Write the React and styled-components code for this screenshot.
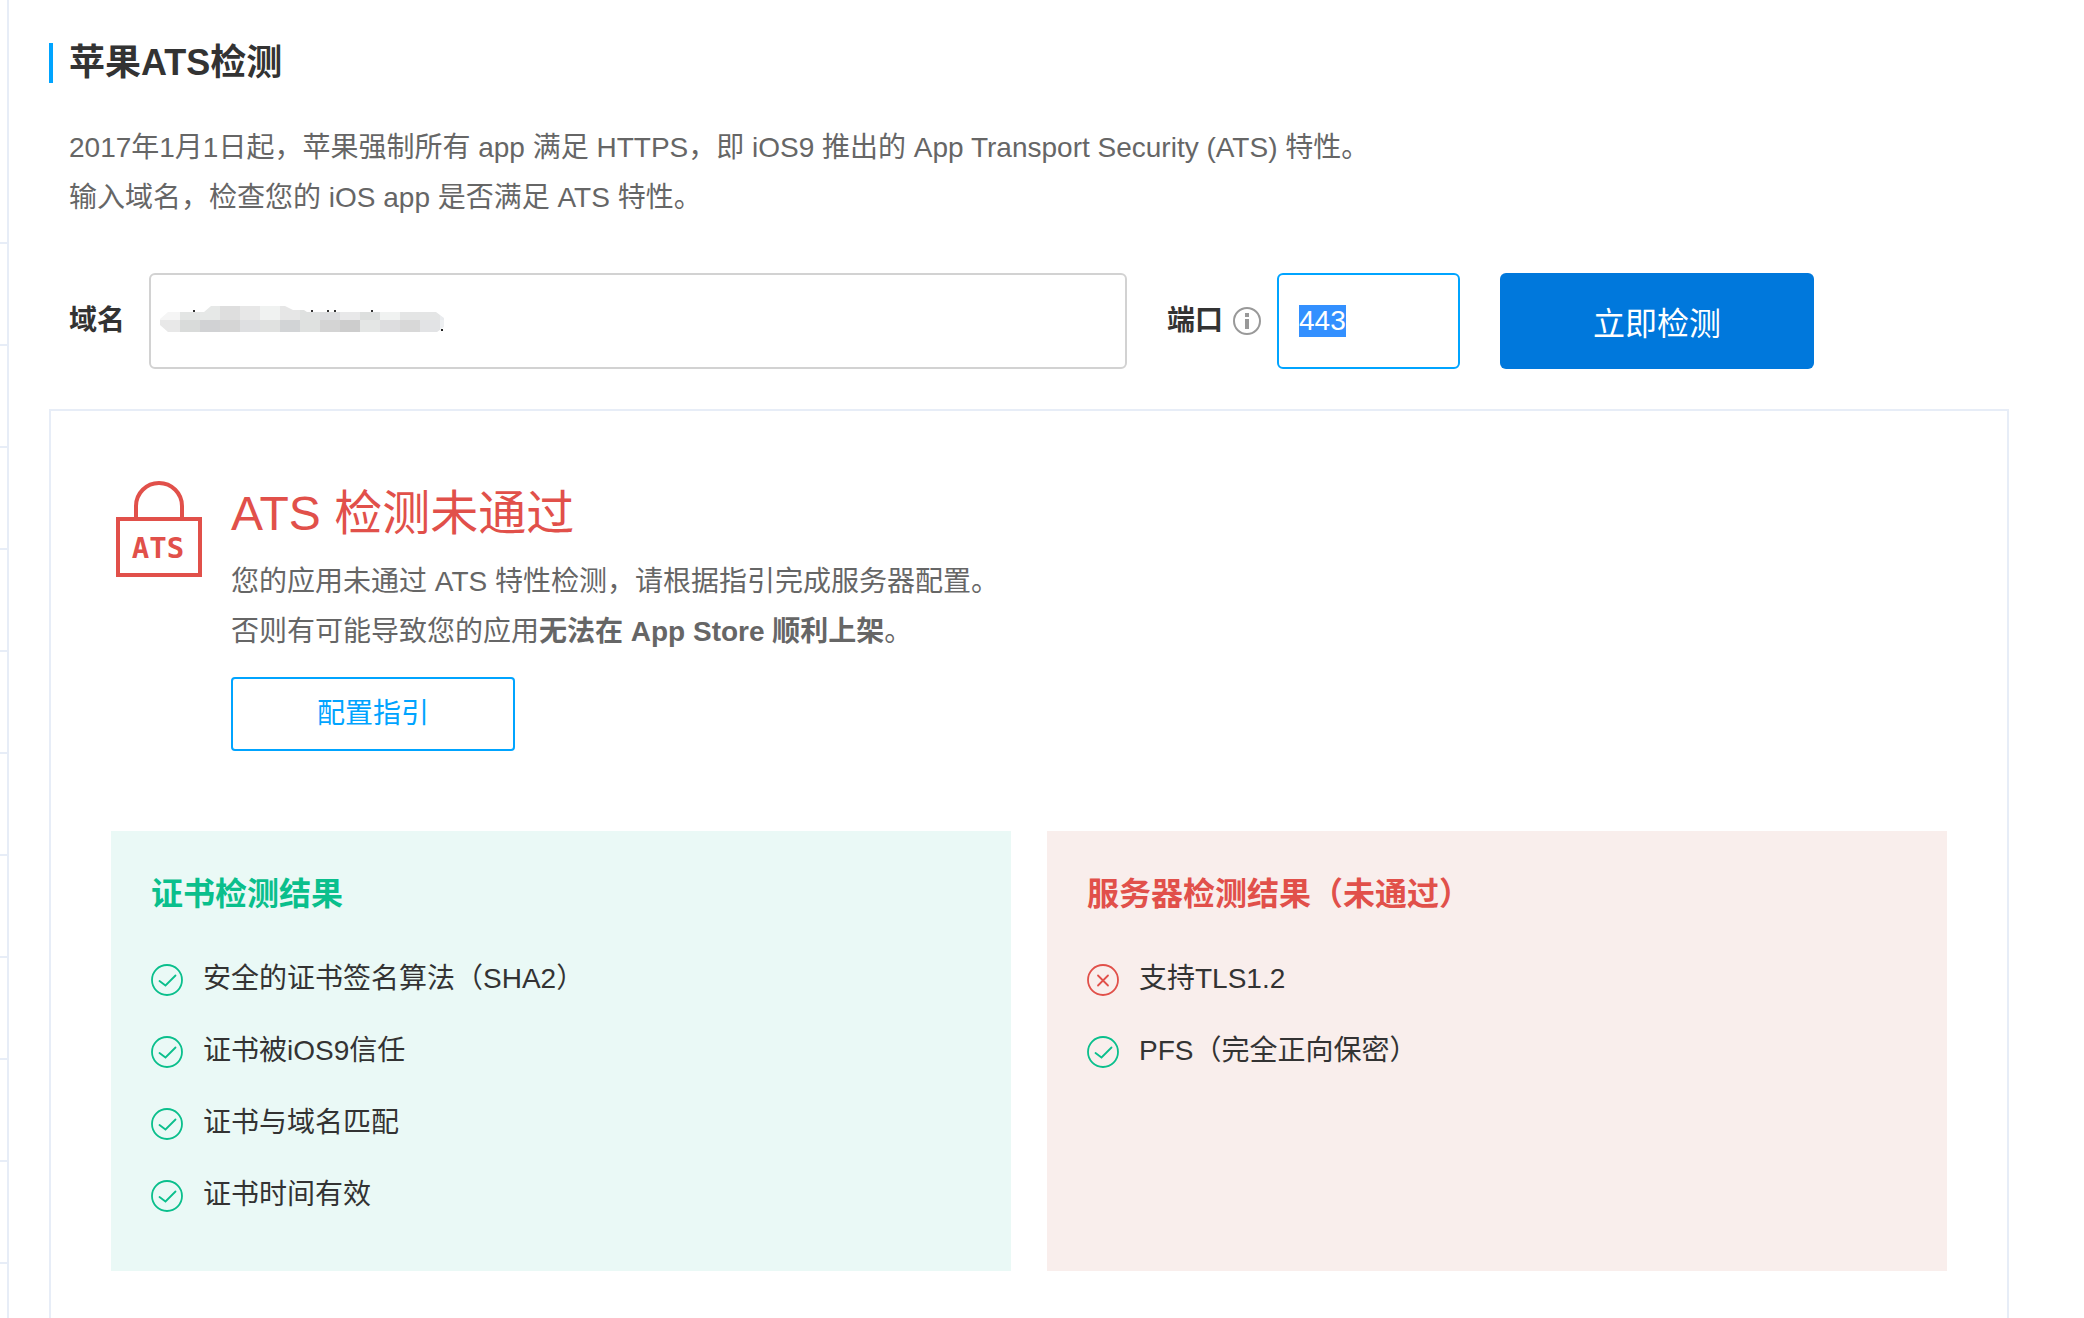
import React, { useEffect, useRef } from "react";
import styled, { createGlobalStyle } from "styled-components";

const LINE = "#e7edf7";
const BLUE = "#00a4ff";
const RED = "#e1504a";
const GREEN = "#0abf8c";

const GlobalStyle = createGlobalStyle`
  *, *::before, *::after { box-sizing: border-box; }
  body {
    margin: 0;
    background: #fff;
    color: #333;
    font-family: "Liberation Sans", "Noto Sans CJK SC", sans-serif;
    font-size: 28px;
  }
  h1, h2, h3, p, ul { margin: 0; padding: 0; }
  ::selection { background: #3390ff; color: #fff; }
`;

const Page = styled.div`
  display: flex;
  min-height: 100vh;
`;

const Rail = styled.aside`
  display: flex;
  width: 9px;
  flex: none;
  padding-top: 242px;
  border-right: 2px solid ${LINE};
`;

const RailTicks = styled.div`
  flex: 1;
  background: repeating-linear-gradient(${LINE} 0 2px, transparent 2px 102px);
`;

const Main = styled.main`
  display: flex;
  flex-direction: column;
  flex: 1;
  min-width: 0;
  padding: 43px 75px 0 40px;
`;

const PageTitle = styled.h1`
  padding-left: 16px;
  border-left: 4px solid ${BLUE};
  font-size: 36px;
  line-height: 40px;
`;

const Text = styled.p`
  color: #666;
  line-height: 50px;
`;

const Intro = styled(Text)`
  margin-top: 40px;
  padding-left: 20px;
`;

const Form = styled.form`
  display: flex;
  align-items: center;
  margin-top: 50px;
  padding-left: 20px;
`;

const Label = styled.label`
  flex: none;
  font-weight: bold;
  line-height: 40px;
`;

const DomainField = styled.div`
  position: relative;
  flex: 0 1 978px;
  min-width: 0;
  margin: 0 40px 0 24px;
`;

const TextInput = styled.input`
  display: block;
  width: ${(p) => p.$width || "100%"};
  height: 96px;
  padding: 0 20px;
  border: 2px solid #d2d2d2;
  border-radius: 6px;
  background: #fff;
  color: #333;
  font: inherit;
  outline: none;

  &:focus { border-color: ${BLUE}; }
`;

const Mosaic = styled.svg`
  position: absolute;
  left: 11px;
  top: 32px;
  pointer-events: none;
`;

const InfoIcon = styled.svg`
  flex: none;
  margin: 0 16px 0 10px;
`;

const SubmitButton = styled.button`
  flex: none;
  width: 314px;
  height: 96px;
  margin-left: 40px;
  padding: 0;
  border: 0;
  border-radius: 6px;
  background: #0078dc;
  color: #fff;
  font: inherit;
  font-size: 32px;
`;

const Card = styled.section`
  flex: 1;
  margin-top: 40px;
  padding: 70px 60px 40px;
  border: 2px solid ${LINE};
  border-bottom: 0;
`;

const Summary = styled.div`
  display: flex;
  gap: 29px;
  padding-left: 5px;
`;

const LockIcon = styled.svg`
  flex: none;
`;

const SummaryTitle = styled.h2`
  margin-bottom: 10px;
  color: ${RED};
  font-size: 48px;
  font-weight: normal;
  line-height: 66px;
`;

const GuideLink = styled.a`
  display: block;
  width: 284px;
  margin-top: 20px;
  border: 2px solid ${BLUE};
  border-radius: 4px;
  color: ${BLUE};
  line-height: 70px;
  text-align: center;
  text-decoration: none;
`;

const Results = styled.div`
  display: grid;
  grid-template-columns: 1fr 1fr;
  gap: 36px;
  margin-top: 80px;
`;

const Panel = styled.section`
  padding: 40px 40px 59px;
  background: ${(p) => (p.$passed ? "#eaf9f6" : "#f9eeec")};
`;

const PanelTitle = styled.h3`
  margin-bottom: 47px;
  color: ${(p) => (p.$passed ? GREEN : RED)};
  font-size: 32px;
  line-height: 46px;
`;

const CheckList = styled.ul`
  display: grid;
  gap: 40px;
  list-style: none;
`;

const CheckItem = styled.li`
  display: flex;
  align-items: flex-start;
  gap: 20px;
  height: 32px;
  line-height: 30px;
`;

const StatusSvg = styled.svg`
  flex: none;
`;

function StatusIcon({ ok }) {
  return (
    <StatusSvg width="32" height="32" viewBox="0 0 32 32" fill="none" stroke={ok ? GREEN : RED} strokeWidth="1.8" strokeLinecap="round" aria-hidden="true">
      <circle cx="16" cy="16" r="15" />
      {ok ? <path d="M8.5 17l6 4.5 10-10" /> : <path d="M11 11.5l10 10M21 11.5l-10 10" />}
    </StatusSvg>
  );
}

const TOP_CELLS = ["#f5f5f5", "#e3e5e4", "#e6e8e7", "#dedede", "#e7e7e7", "#f0f2f1", "#e6e6e6", "#dfe1e0", "#dcdddf", "#e8e8e9", "#dddfde", "#f0f2f1", "#e4e5e5", "#e4e5e5", "#e9ebee"];
const BOTTOM_CELLS = ["#e8e8e8", "#d9dbda", "#d1d2d4", "#d5d5d5", "#dedfe1", "#e0e1e0", "#d2d4d6", "#dfe1e0", "#d4d4d4", "#cdcdcd", "#e4e6e5", "#dddddf", "#d8d8d8", "#e2e3e5", "#eef0f2"];
const SPECKS = [34, 152, 168, 175, 212];

function MaskedDomain() {
  return (
    <Mosaic width="286" height="28" viewBox="0 0 286 28" aria-hidden="true">
      <clipPath id="mask-outline">
        <path d="M8 7H44L51 1H125L133 5H144L147 7H276L284 13V22L277 27H8L0 20V14Z" />
      </clipPath>
      <g clipPath="url(#mask-outline)" shapeRendering="crispEdges">
        {TOP_CELLS.map((fill, i) => <rect key={i} x={i * 20} y="0" width="20" height="15" fill={fill} />)}
        {BOTTOM_CELLS.map((fill, i) => <rect key={i} x={i * 20} y="15" width="20" height="13" fill={fill} />)}
      </g>
      {SPECKS.map((x) => <rect key={x} x={x - 1} y="5" width="2" height="2" fill="#333" />)}
      <rect x="281" y="24" width="2" height="2" fill="#222" />
    </Mosaic>
  );
}

const CERT_CHECKS = [
  { text: "安全的证书签名算法（SHA2）", ok: true },
  { text: "证书被iOS9信任", ok: true },
  { text: "证书与域名匹配", ok: true },
  { text: "证书时间有效", ok: true },
];

const SERVER_CHECKS = [
  { text: "支持TLS1.2", ok: false },
  { text: "PFS（完全正向保密）", ok: true },
];

function ResultPanel({ title, passed, checks }) {
  return (
    <Panel $passed={passed}>
      <PanelTitle $passed={passed}>{title}</PanelTitle>
      <CheckList>
        {checks.map((c) => (
          <CheckItem key={c.text}>
            <StatusIcon ok={c.ok} />
            <span>{c.text}</span>
          </CheckItem>
        ))}
      </CheckList>
    </Panel>
  );
}

export default function App() {
  const portRef = useRef(null);

  useEffect(() => {
    portRef.current.focus();
    portRef.current.select();
  }, []);

  return (
    <>
      <GlobalStyle />
      <Page lang="zh-CN">
        <Rail aria-hidden="true">
          <RailTicks />
        </Rail>
        <Main>
          <PageTitle>苹果ATS检测</PageTitle>
          <Intro>
            2017年1月1日起，苹果强制所有 app 满足 HTTPS，即 iOS9 推出的 App Transport Security (ATS) 特性。
            <br />
            输入域名，检查您的 iOS app 是否满足 ATS 特性。
          </Intro>

          <Form onSubmit={(e) => e.preventDefault()}>
            <Label htmlFor="domain">域名</Label>
            <DomainField>
              <TextInput id="domain" type="text" />
              <MaskedDomain />
            </DomainField>
            <Label htmlFor="port">端口</Label>
            <InfoIcon width="28" height="28" viewBox="0 0 28 28" aria-hidden="true">
              <circle cx="14" cy="14" r="13" fill="none" stroke="#999" strokeWidth="2" />
              <path d="M12 6h4v4h-4zM12 12h4v10h-4z" fill="#999" />
            </InfoIcon>
            <TextInput id="port" type="text" $width="183px" defaultValue="443" ref={portRef} />
            <SubmitButton type="submit">立即检测</SubmitButton>
          </Form>

          <Card>
            <Summary>
              <LockIcon width="86" height="96" viewBox="0 0 86 96" aria-hidden="true">
                <g fill="none" stroke={RED} strokeWidth="4">
                  <path d="M20 38V25a23 23 0 0 1 46 0V38" />
                  <rect x="2" y="38" width="82" height="56" />
                </g>
                <text x="42" y="77" textAnchor="middle" fill={RED} fontFamily='"DejaVu Sans Mono", monospace' fontSize="29" fontWeight="bold">ATS</text>
              </LockIcon>
              <div>
                <SummaryTitle>ATS 检测未通过</SummaryTitle>
                <Text>
                  您的应用未通过 ATS 特性检测，请根据指引完成服务器配置。
                  <br />
                  否则有可能导致您的应用<strong>无法在 App Store 顺利上架</strong>。
                </Text>
                <GuideLink href="#guide">配置指引</GuideLink>
              </div>
            </Summary>

            <Results>
              <ResultPanel title="证书检测结果" passed checks={CERT_CHECKS} />
              <ResultPanel title="服务器检测结果（未通过）" passed={false} checks={SERVER_CHECKS} />
            </Results>
          </Card>
        </Main>
      </Page>
    </>
  );
}
